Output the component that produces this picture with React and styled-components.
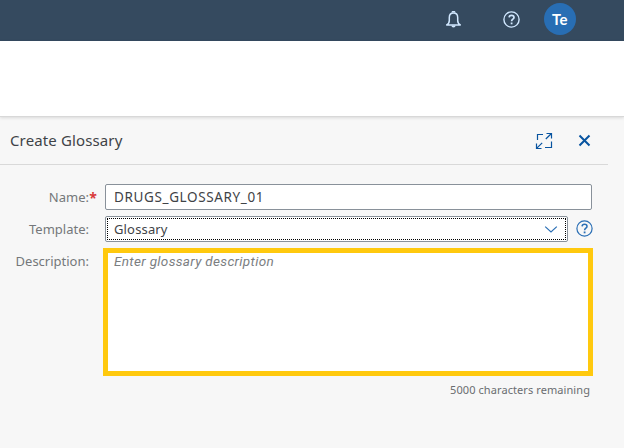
import React from "react";
import styled, { createGlobalStyle } from "styled-components";

const Global = createGlobalStyle`
  * { box-sizing: border-box; }
  body { margin: 0; background: #f7f7f7; font-family: "Noto Sans", sans-serif; color: #3f4347; }
`;

const Page = styled.div`
  height: 448px;
  overflow: hidden;
  background: #f7f7f7;
`;

const ShellBar = styled.header`
  height: 41px;
  display: flex;
  align-items: flex-start;
  justify-content: flex-end;
  padding: 3px 48px 0 0;
  background: #354a5f;
  color: #d1e8ff;
`;

const ShellIcon = styled.span`
  width: 31px;
  height: 32px;
  display: grid;
  place-items: center;
  margin-right: ${(p) => p.$gap}px;
`;

const Avatar = styled.span`
  width: 32px;
  height: 32px;
  border-radius: 50%;
  display: grid;
  place-items: center;
  background: #286eb4;
  color: #fff;
  font: 700 15px/31px Lato, sans-serif;
  letter-spacing: 0.3px;
`;

const Band = styled.div`
  height: 76px;
  background: #fff;
  border-bottom: 1px solid #d8d8d8;
  box-shadow: 0 1px 3px rgba(0, 0, 0, 0.12);
`;

const PanelHeader = styled.div`
  width: 608px;
  height: 48px;
  display: flex;
  align-items: center;
  padding: 0 17px 0 10px;
  border-bottom: 1px solid #d9d9d9;
`;

const Title = styled.h1`
  flex: 1;
  margin: 0;
  padding-bottom: 2px;
  font-size: 15px;
  line-height: 20px;
  font-weight: 400;
  letter-spacing: 0.13px;
`;

const HeaderIcon = styled.span`
  display: flex;
  margin-left: ${(p) => p.$gap || 0}px;
  color: #0854a0;
`;

const Form = styled.div`
  display: grid;
  grid-template-columns: 97px 490px;
  column-gap: 6px;
  row-gap: 6px;
  padding-top: 19px;
`;

const Label = styled.label`
  height: 26px;
  padding-right: ${(p) => (p.$required ? 0 : 8)}px;
  text-align: right;
  white-space: nowrap;
  font-size: 13px;
  line-height: 26px;
  color: #74777a;
`;

const Star = styled.span`
  display: inline-block;
  width: 8px;
  text-align: center;
  font-size: 14px;
  font-weight: 700;
  line-height: 20px;
  vertical-align: -1px;
  color: #d93a3a;
`;

const FieldLine = styled.div`
  display: flex;
  height: 26px;
  padding: 0 1px 0 2px;
`;

const Field = styled.div`
  flex: 1;
  height: 26px;
  display: flex;
  align-items: center;
  padding-left: 8px;
  background: #fff;
  border: 1px solid #89919a;
  border-radius: 2px;
  font-size: ${(p) => p.$size || 13}px;
  letter-spacing: ${(p) => p.$track}px;
`;

const SelectField = styled(Field)`
  padding: 0 9px 0 8px;
  justify-content: space-between;
  outline: 1px dotted #000;
  outline-offset: -3px;
`;

const Help = styled.span`
  display: flex;
  padding: 4px 0 0 8px;
  margin-right: -1px;
  color: #2a6fb5;
`;

const DescriptionBox = styled.div`
  height: 128px;
  padding: 1px 6px;
  background: #fff;
  border: 5px solid #ffc90e;
  font-family: Roboto, sans-serif;
  font-size: 13.5px;
  line-height: 15px;
  font-style: italic;
  letter-spacing: 0.33px;
  color: #7b7e81;
`;

const Counter = styled.div`
  grid-column: 2;
  padding: 0 3px 0 0;
  text-align: right;
  font-size: 11px;
  line-height: 16px;
  letter-spacing: 0.08px;
  color: #6a6d70;
`;

const Svg = ({ size, children, ...rest }) => (
  <svg width={size} height={size} viewBox={`0 0 ${size} ${size}`} fill="none" stroke="currentColor" {...rest}>
    {children}
  </svg>
);

const QuestionIcon = ({ weight = 1.4 }) => (
  <Svg size={17} strokeWidth={weight}>
    <circle cx="8.5" cy="8.5" r="7.6" />
    <path d="M6.1 6.4C6.2 4.9 7.1 4.3 8.5 4.3s2.5.8 2.5 2.1c0 1.8-2.4 1.8-2.4 3.8" strokeWidth={weight + 0.3} />
    <path d="M7.7 12.4h1.8" strokeWidth="1.8" />
  </Svg>
);

const BellIcon = () => (
  <Svg size={17} strokeWidth="1.5">
    <path d="M1.7 14c2-1.1 2.6-2.1 2.6-4.5V6.5C4.3 3.7 5.8 2 8.5 2s4.2 1.7 4.2 4.5v3c0 2.4.6 3.4 2.6 4.5z" strokeLinejoin="round" />
    <path d="M7.3 1.6a1.2 1.1 0 0 1 2.4 0" />
    <path d="M6.4 14.5a2.1 2 0 0 0 4.2 0z" fill="currentColor" stroke="none" />
  </Svg>
);

const ExpandIcon = () => (
  <Svg size={18} strokeWidth="1.2">
    <path d="M8 2.5H2.5V8M16.5 9.5v6H10M11.5 1.5h5v5M16.2 1.8l-5.4 5.2M1.5 11.5v5h5M1.8 16.2l5.4-5.4" />
  </Svg>
);

const CloseIcon = () => (
  <Svg size={13} strokeWidth="2">
    <path d="M1.5 1.5l10 10M11.5 1.5l-10 10" />
  </Svg>
);

const ChevronIcon = () => (
  <Svg size={14} strokeWidth="1.2">
    <path d="M1.2 4.6L7 10l5.8-5.4" />
  </Svg>
);

const ChevronBox = styled.span`
  display: flex;
  color: #2a6fb5;
`;

export default function App() {
  return (
    <Page>
      <Global />
      <ShellBar>
        <ShellIcon $gap={27}><BellIcon /></ShellIcon>
        <ShellIcon $gap={17}><QuestionIcon /></ShellIcon>
        <Avatar>Te</Avatar>
      </ShellBar>
      <Band />
      <PanelHeader>
        <Title>Create Glossary</Title>
        <HeaderIcon><ExpandIcon /></HeaderIcon>
        <HeaderIcon $gap={25}><CloseIcon /></HeaderIcon>
      </PanelHeader>
      <Form>
        <Label $required>Name:<Star>*</Star></Label>
        <FieldLine><Field $size={13.5} $track={0.63}>DRUGS_GLOSSARY_01</Field></FieldLine>
        <Label>Template:</Label>
        <FieldLine>
          <SelectField $track={0.15}>Glossary<ChevronBox><ChevronIcon /></ChevronBox></SelectField>
          <Help><QuestionIcon weight={1.2} /></Help>
        </FieldLine>
        <Label>Description:</Label>
        <DescriptionBox>Enter glossary description</DescriptionBox>
        <Counter>5000 characters remaining</Counter>
      </Form>
    </Page>
  );
}
